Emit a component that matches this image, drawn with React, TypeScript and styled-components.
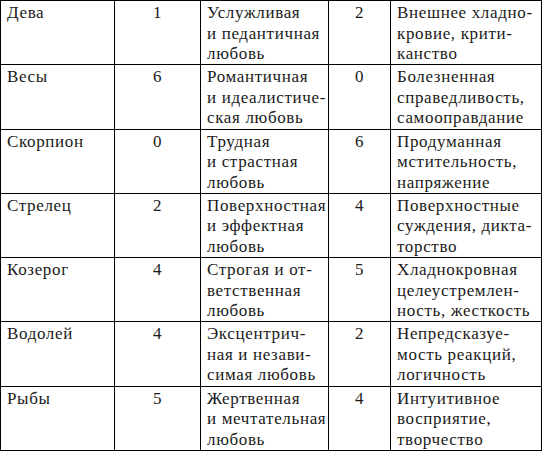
import { Fragment } from 'react';
import styled, { createGlobalStyle } from 'styled-components';

const GlobalStyle = createGlobalStyle`
  html, body {
    margin: 0;
    padding: 0;
    background: #ffffff;
  }
`;

type Row = {
  sign: string;
  love: string;
  loveText: string[];
  flaw: string;
  flawText: string[];
};

const rows: Row[] = [
  {
    sign: 'Дева',
    love: '1',
    loveText: ['Услужливая', 'и педантичная', 'любовь'],
    flaw: '2',
    flawText: ['Внешнее хладно-', 'кровие, крити-', 'канство'],
  },
  {
    sign: 'Весы',
    love: '6',
    loveText: ['Романтичная', 'и идеалистиче-', 'ская любовь'],
    flaw: '0',
    flawText: ['Болезненная', 'справедливость,', 'самооправдание'],
  },
  {
    sign: 'Скорпион',
    love: '0',
    loveText: ['Трудная', 'и страстная', 'любовь'],
    flaw: '6',
    flawText: ['Продуманная', 'мстительность,', 'напряжение'],
  },
  {
    sign: 'Стрелец',
    love: '2',
    loveText: ['Поверхностная', 'и эффектная', 'любовь'],
    flaw: '4',
    flawText: ['Поверхностные', 'суждения, дикта-', 'торство'],
  },
  {
    sign: 'Козерог',
    love: '4',
    loveText: ['Строгая и от-', 'ветственная', 'любовь'],
    flaw: '5',
    flawText: ['Хладнокровная', 'целеустремлен-', 'ность, жесткость'],
  },
  {
    sign: 'Водолей',
    love: '4',
    loveText: ['Эксцентрич-', 'ная и незави-', 'симая любовь'],
    flaw: '2',
    flawText: ['Непредсказуе-', 'мость реакций,', 'логичность'],
  },
  {
    sign: 'Рыбы',
    love: '5',
    loveText: ['Жертвенная', 'и мечтательная', 'любовь'],
    flaw: '4',
    flawText: ['Интуитивное', 'восприятие,', 'творчество'],
  },
];

const Table = styled.div`
  display: grid;
  grid-template-columns: 114px 86px 128px 62px 151px;
  grid-auto-rows: 64.3px;
  width: 542px;
  border-left: 1px solid #000;
  border-top: 1px solid #000;
  font-family: 'Liberation Serif', 'Times New Roman', serif;
  font-size: 17px;
  letter-spacing: 0.65px;
  line-height: 20.5px;
  color: #1a1a1a;
`;

const Cell = styled.div<{ $center?: boolean }>`
  border-right: 1px solid #000;
  border-bottom: 1px solid #000;
  padding: ${(p) => (p.$center ? '2px 0 0 0' : '2px 2px 0 6px')};
  text-align: ${(p) => (p.$center ? 'center' : 'left')};
  overflow: hidden;
  white-space: nowrap;
`;

const Line = styled.div`
  display: block;
`;

export default function App() {
  return (
    <>
      <GlobalStyle />
      <Table>
        {rows.map((row) => (
          <Fragment key={row.sign}>
            <Cell>{row.sign}</Cell>
            <Cell $center>{row.love}</Cell>
            <Cell>
              {row.loveText.map((t, i) => (
                <Line key={i}>{t}</Line>
              ))}
            </Cell>
            <Cell $center>{row.flaw}</Cell>
            <Cell>
              {row.flawText.map((t, i) => (
                <Line key={i}>{t}</Line>
              ))}
            </Cell>
          </Fragment>
        ))}
      </Table>
    </>
  );
}
